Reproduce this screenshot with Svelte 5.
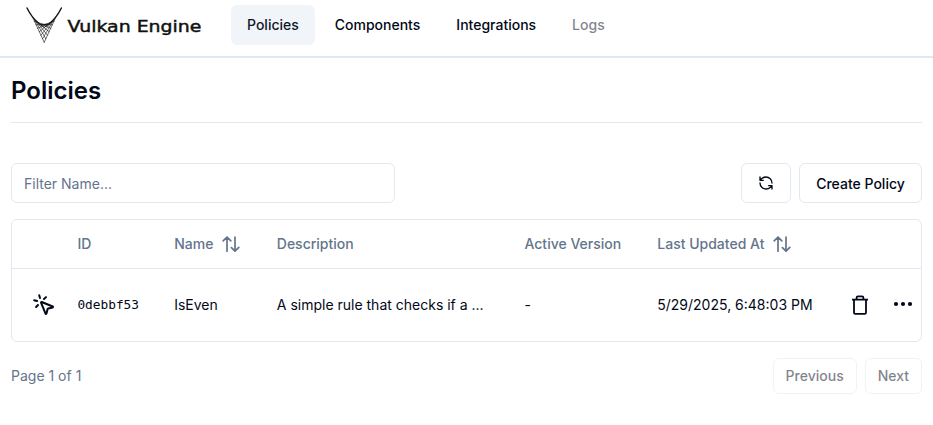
<script>
  const nav = [
    { label: 'Policies', active: true },
    { label: 'Components' },
    { label: 'Integrations' },
    { label: 'Logs', disabled: true }
  ];
  const strands = Array.from({ length: 7 }, (_, i) => {
    const t = i / 6;
    return {
      x1: 7 + 8 * t,
      y1: 11 + 7.5 * t,
      x2: 18.2 + 10 * t,
      y2: 35.3 - 21 * t
    };
  });
</script>

{#snippet sortIcon()}
  <svg class="sort" width="18" height="18" viewBox="0 0 18 18" fill="none" stroke="currentColor" stroke-width="1.7" stroke-linecap="round" stroke-linejoin="round">
    <path d="M5 16.2V2M1.2 5.8 5 2l3.8 3.8M13 2v14.2M9.4 12.6l3.6 3.6 3.8-3.8" />
  </svg>
{/snippet}

<header>
  <div class="brand">
    <svg width="37" height="37" viewBox="0 0 37 37" fill="none" stroke="#111" stroke-linecap="round">
      {#each strands as s}
        <line x1={s.x1} y1={s.y1} x2={s.x2} y2={s.y2} stroke-width="0.6" />
        <line x1={36.4 - s.x1} y1={s.y1} x2={36.4 - s.x2} y2={s.y2} stroke-width="0.6" />
      {/each}
      <path d="M1 1Q5.5 10 12 15.8M35.4 1Q30.9 10 24.4 15.8" stroke-width="1.4" />
      <path d="M12 15.8 18.2 20.3 24.4 15.8" stroke-width="0.8" />
    </svg>
    <svg class="wordmark" width="136" height="26" viewBox="0 0 136 26">
      <text x="0.5" y="17.5" textLength="134" lengthAdjust="spacingAndGlyphs">Vulkan Engine</text>
    </svg>
  </div>
  <nav>
    {#each nav as item}
      <a class:active={item.active} class:disabled={item.disabled}>{item.label}</a>
    {/each}
  </nav>
</header>

<main>
  <h1>Policies</h1>
  <div class="toolbar">
    <input placeholder="Filter Name..." />
    <div class="actions">
      <button class="refresh" aria-label="Refresh">
        <svg width="16" height="16" viewBox="0 0 24 24" fill="none" stroke="currentColor" stroke-width="2" stroke-linecap="round" stroke-linejoin="round">
          <path d="M21 12a9 9 0 0 0-9-9 9.75 9.75 0 0 0-6.74 2.74L3 8M3 3v5h5M3 12a9 9 0 0 0 9 9 9.75 9.75 0 0 0 6.74-2.74L21 16M16 16h5v5" />
        </svg>
      </button>
      <button class="create">Create Policy</button>
    </div>
  </div>

  <section class="table">
    <div class="row head">
      <span></span>
      <span>ID</span>
      <span class="sortable">Name {@render sortIcon()}</span>
      <span>Description</span>
      <span>Active Version</span>
      <span class="sortable">Last Updated At {@render sortIcon()}</span>
    </div>
    <div class="row body">
      <span class="pick">
        <svg width="24" height="24" viewBox="0 0 24 24" fill="none" stroke="currentColor" stroke-width="2" stroke-linecap="round" stroke-linejoin="round">
          <path d="M14 4.1 12 6M5.1 8l-2.9-.8M6 12l-1.9 2M7.2 2.2 8 5.1" />
          <path d="M9.037 9.69a.498.498 0 0 1 .653-.653l11 4.5a.5.5 0 0 1-.074.949l-4.349 1.041a1 1 0 0 0-.74.739l-1.04 4.35a.5.5 0 0 1-.95.074z" />
        </svg>
      </span>
      <span class="id">0debbf53</span>
      <span>IsEven</span>
      <span>A simple rule that checks if a ...</span>
      <span>-</span>
      <span>5/29/2025, 6:48:03 PM</span>
      <span class="trash">
        <svg width="18" height="20" viewBox="0 0 18 20" fill="none" stroke="currentColor" stroke-width="1.8" stroke-linejoin="round">
          <path d="M1 4.7h16M3 4.7V17.6a1.3 1.3 0 0 0 1.3 1.3h9.4a1.3 1.3 0 0 0 1.3-1.3V4.7M5.6 4.5V2.7a1.4 1.4 0 0 1 1.4-1.4h4a1.4 1.4 0 0 1 1.4 1.4v1.8" />
        </svg>
      </span>
      <span class="more">
        <svg width="20" height="6" viewBox="0 0 20 6" fill="currentColor">
          <circle cx="3" cy="3" r="2.1" /><circle cx="10" cy="3" r="2.1" /><circle cx="17" cy="3" r="2.1" />
        </svg>
      </span>
    </div>
  </section>

  <footer>
    <span>Page 1 of 1</span>
    <div class="pager">
      <button disabled>Previous</button>
      <button disabled>Next</button>
    </div>
  </footer>
</main>

<style>
  :global(body) {
    background: #fff;
    color: #020817;
    font: 14px/20px Inter, "Liberation Sans", sans-serif;
  }
  header {
    display: flex;
    align-items: flex-start;
    box-sizing: border-box;
    height: 58px;
    padding: 5px 0 0 26px;
    border-bottom: 2px solid #e2e8f0;
  }
  .brand {
    display: flex;
    width: 205px;
    padding-top: 2px;
  }
  .wordmark {
    margin: 6.5px 0 0 4px;
  }
  .wordmark text {
    font: 16px "DejaVu Sans", sans-serif;
    fill: #111;
    stroke: #111;
    stroke-width: 0.45px;
  }
  nav {
    display: flex;
    gap: 4px;
  }
  nav a {
    padding: 10px 16px;
    border-radius: 6px;
    font-weight: 500;
  }
  nav a.active {
    background: #f1f5f9;
    color: #0f172a;
  }
  nav a.disabled {
    opacity: 0.5;
  }
  main {
    padding: 17px 11px 0;
  }
  h1 {
    margin: 0 0 40px;
    padding-bottom: 15px;
    border-bottom: 1px solid #e2e8f0;
    font-size: 24px;
    line-height: 32px;
    font-weight: 600;
  }
  .toolbar,
  footer {
    display: flex;
    justify-content: space-between;
    align-items: center;
  }
  .toolbar {
    margin-bottom: 16px;
  }
  input,
  button {
    box-sizing: border-box;
    border: 1px solid #e2e8f0;
    border-radius: 6px;
    background: #fff;
    color: inherit;
    font: inherit;
  }
  input {
    width: 384px;
    height: 40px;
    padding: 8px 12px;
  }
  input::placeholder {
    color: #64748b;
  }
  .actions,
  .pager {
    display: flex;
    gap: 8px;
  }
  button {
    display: flex;
    justify-content: center;
    align-items: center;
    height: 40px;
    padding: 0;
    font-weight: 500;
  }
  .refresh {
    width: 50px;
  }
  .create {
    width: 123px;
    padding-top: 2px;
  }
  .table {
    border: 1px solid #e2e8f0;
    border-radius: 6px;
  }
  .row {
    display: grid;
    grid-template-columns: 65.4px 96.8px 102.6px 247.7px 132.8px 183.7px 43px 1fr;
    align-items: center;
    white-space: nowrap;
  }
  .head {
    height: 48px;
    border-bottom: 1px solid #e2e8f0;
    color: #64748b;
    font-weight: 500;
  }
  .body {
    height: 72px;
  }
  .row svg {
    display: block;
  }
  .sortable {
    display: flex;
    align-items: center;
    gap: 8.5px;
  }
  .pick {
    padding: 0 0 1px 19.6px;
  }
  .id {
    padding-bottom: 1px;
    font-family: "DejaVu Sans Mono", monospace;
    font-size: 12.8px;
  }
  .trash {
    padding-left: 10px;
  }
  .more {
    padding: 0 0 2px 9.5px;
  }
  footer {
    margin-top: 16px;
    color: #64748b;
  }
  .pager button {
    height: 36px;
    padding: 0 12px;
    color: #020817;
    opacity: 0.5;
  }
</style>
